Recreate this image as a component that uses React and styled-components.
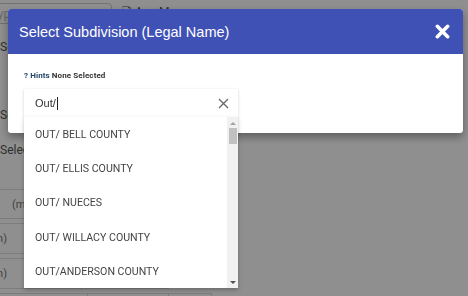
import React from "react";
import styled, { createGlobalStyle } from "styled-components";

const GlobalStyle = createGlobalStyle`
  html, body {
    margin: 0;
    height: 100%;
    overflow: hidden;
  }
  body {
    font-family: Roboto, "Liberation Sans", Arial, sans-serif;
    background: #ffffff;
  }
`;

/* ---------- page behind the dialog ---------- */

const Page = styled.div`
  margin-left: -22px;
  padding-top: 3px;
  color: #444;
  font-size: 12px;
`;

const TopRow = styled.div`
  display: flex;
  align-items: center;
  gap: 10px;
`;

const SearchBox = styled.div`
  width: 120px;
  height: 19px;
  border: 1px solid #ccc;
  border-radius: 4px;
  display: flex;
  align-items: center;
  padding-left: 12px;
  color: #bbb;
`;

const PageLink = styled.div`
  color: #555;
  font-size: 12px;
  align-self: flex-start;
`;

const PageLabel = styled.div`
  padding-left: 22px;
  margin-top: ${(p) => p.top}px;
  line-height: 14px;
  color: #555;
`;

const Grid = styled.div`
  margin-top: 32px;
  display: grid;
  grid-template-columns: 110px 4px 120px;
  row-gap: 4px;
`;

const Cell = styled.div`
  height: ${(p) => (p.head ? 28 : 29)}px;
  border-top: 1px solid #ddd;
  border-bottom: 1px solid #ddd;
  border-right: 1px solid #ddd;
  display: flex;
  align-items: center;
  justify-content: ${(p) => (p.head ? "flex-start" : "flex-end")};
  padding: ${(p) => (p.head ? "0 0 0 34px" : "0 80px 0 0")};
  color: #777;
  font-size: 11px;
`;

const Overlay = styled.div`
  position: fixed;
  inset: 0;
  background: rgba(0, 0, 0, 0.44);
`;

/* ---------- dialog ---------- */

const Dialog = styled.div`
  position: fixed;
  top: 9px;
  left: 8px;
  width: 455px;
  background: #fff;
  border-radius: 3px;
  box-shadow: 0 4px 8px rgba(0, 0, 0, 0.35);
`;

const Header = styled.div`
  height: 45px;
  background: #3f51b5;
  border-radius: 3px 3px 0 0;
  display: flex;
  align-items: center;
  justify-content: space-between;
  padding: 0 13px 0 11px;
`;

const Title = styled.h2`
  margin: 0;
  font-family: "Liberation Sans", Arial, sans-serif;
  font-size: 14.5px;
  font-weight: 400;
  color: #fff;
`;

const CloseButton = styled.button`
  border: 0;
  background: none;
  padding: 0;
  width: 16px;
  height: 16px;
  display: flex;
  align-items: center;
  justify-content: center;
`;

const Body = styled.div`
  padding: 17px 16px 15px;
`;

const Hints = styled.div`
  font-size: 8px;
  font-weight: 700;
  color: #333;
  margin-bottom: 9px;
  letter-spacing: 0.1px;
`;

const HintLink = styled.span`
  color: #22466b;
`;

const Field = styled.div`
  position: relative;
  width: 214px;
`;

const InputRow = styled.div`
  height: 29px;
  display: flex;
  align-items: center;
  justify-content: space-between;
  padding: 0 9px 0 11px;
  background: #fff;
  box-shadow: 0 1px 3px rgba(0, 0, 0, 0.18);
`;

const InputText = styled.span`
  font-family: "Liberation Sans", Arial, sans-serif;
  font-size: 11px;
  color: #333;
`;

const Caret = styled.span`
  display: inline-block;
  width: 1px;
  height: 13px;
  background: #222;
  vertical-align: -3px;
  margin-left: 1px;
`;

const Menu = styled.div`
  position: absolute;
  top: 28px;
  left: 0;
  width: 214px;
  height: 171px;
  background: #fff;
  box-shadow: 0 2px 4px rgba(0, 0, 0, 0.25);
  display: flex;
`;

const Options = styled.ul`
  list-style: none;
  margin: 0;
  padding: 0;
  flex: 1;
`;

const Option = styled.li`
  height: 34.3px;
  display: flex;
  align-items: center;
  padding-left: 11px;
  font-size: 10.6px;
  color: #444;
  text-transform: uppercase;
`;

const Scrollbar = styled.div`
  width: 11px;
  background: #f1f1f1;
  display: flex;
  flex-direction: column;
  align-items: center;
`;

const Arrow = styled.div`
  width: 0;
  height: 0;
  margin: ${(p) => (p.down ? "auto 0 4px" : "5px 0 3px")};
  border-left: 3px solid transparent;
  border-right: 3px solid transparent;
  ${(p) =>
    p.down ? "border-top: 3px solid #505050;" : "border-bottom: 3px solid #a3a3a3;"}
`;

const Thumb = styled.div`
  width: 8px;
  height: 16px;
  background: #c1c1c1;
`;

const options = [
  "Out/ Bell County",
  "Out/ Ellis County",
  "Out/ Nueces",
  "Out/ Willacy County",
  "Out/Anderson County",
];

const rows = [
  ["(min)", "", ""],
  ["(min)", "", ""],
  ["(min)", "", ""],
  ["(min)", "", "(mnv)"],
];

const App = () => {
  return (
    <>
      <GlobalStyle />
      <Page>
        <TopRow>
          <SearchBox>Type</SearchBox>
          <PageLink>🗋 Age Man</PageLink>
        </TopRow>
        <PageLabel top={16}>Se</PageLabel>
        <PageLabel top={54}>Se</PageLabel>
        <PageLabel top={21}>Select</PageLabel>
        <Grid>
          {rows.map((r, i) =>
            r.map((c, j) => (
              <Cell key={`${i}-${j}`} head={i === 0 || j === 2}>
                {c}
              </Cell>
            ))
          )}
        </Grid>
      </Page>
      <Overlay />
      <Dialog>
        <Header>
          <Title>Select Subdivision (Legal Name)</Title>
          <CloseButton aria-label="Close">
            <svg width="15" height="15" viewBox="0 0 16 16">
              <path
                d="M2.5 2.5 L13.5 13.5 M13.5 2.5 L2.5 13.5"
                stroke="#fff"
                strokeWidth="3.8"
                strokeLinecap="round"
              />
            </svg>
          </CloseButton>
        </Header>
        <Body>
          <Hints>
            <HintLink>? Hints</HintLink> None Selected
          </Hints>
          <Field>
            <InputRow>
              <InputText>
                Out/
                <Caret />
              </InputText>
              <svg width="11" height="11" viewBox="0 0 11 11">
                <path
                  d="M1 1 L10 10 M10 1 L1 10"
                  stroke="#666"
                  strokeWidth="1.3"
                />
              </svg>
            </InputRow>
            <Menu>
              <Options>
                {options.map((o) => (
                  <Option key={o}>{o}</Option>
                ))}
              </Options>
              <Scrollbar>
                <Arrow />
                <Thumb />
                <Arrow down />
              </Scrollbar>
            </Menu>
          </Field>
        </Body>
      </Dialog>
    </>
  );
};

export default App;
